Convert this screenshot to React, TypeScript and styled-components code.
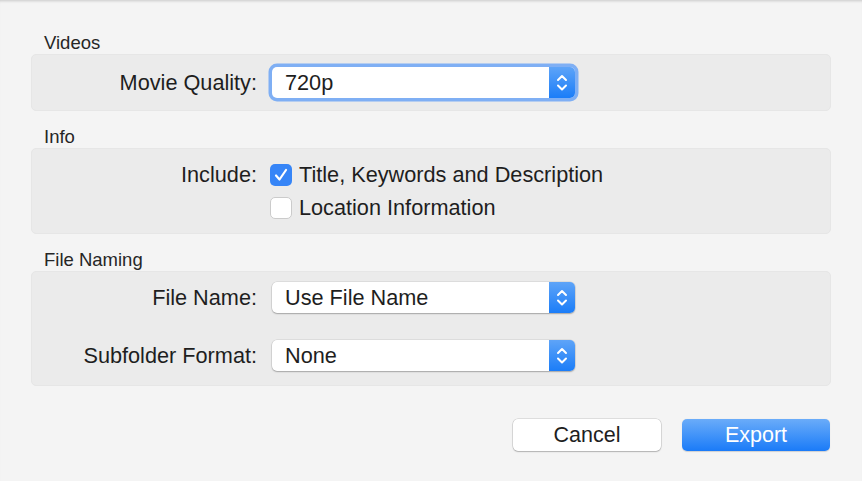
import React from "react";
import styled, { createGlobalStyle } from "styled-components";

const GlobalStyle = createGlobalStyle`
    html, body {
        margin: 0;
        padding: 0;
        background: #f4f4f4;
    }
    body {
        font-family: "Liberation Sans", Arial, sans-serif;
        color: #1e1e1e;
    }
`;

const Window = styled.div`
    width: 862px;
    height: 481px;
    box-sizing: border-box;
    padding: 32px 31px 0 31px;
    background: #f4f4f4;
    box-shadow: inset 0 3px 3px -2px rgba(0, 0, 0, 0.18);
`;

const Section = styled.section`
    margin-bottom: 15px;
`;

const SectionTitle = styled.div`
    font-size: 18.5px;
    line-height: 22px;
    color: #262626;
    padding-left: 13px;
`;

const Panel = styled.div<{ $pad: string; $rowGap: number }>`
    background: #ebebeb;
    border: 1px solid #e6e6e6;
    border-radius: 5px;
    padding: ${p => p.$pad};
    display: grid;
    grid-template-columns: 225px 1fr;
    column-gap: 15px;
    row-gap: ${p => p.$rowGap}px;
`;

const Label = styled.div<{ $top?: boolean }>`
    font-size: 21.7px;
    text-align: right;
    align-self: ${p => (p.$top ? "start" : "center")};
    line-height: 26px;
`;

const Select = styled.div<{ $focused?: boolean }>`
    width: 303px;
    height: 31px;
    display: flex;
    background: #fff;
    border-radius: 5px;
    box-shadow: ${p =>
        p.$focused
            ? "0 0 0 3.5px rgba(100, 160, 246, 0.8)"
            : "0 0 0 0.5px rgba(0, 0, 0, 0.12), 0 1px 1.5px rgba(0, 0, 0, 0.25)"};
    overflow: hidden;
`;

const SelectValue = styled.div`
    flex: 1;
    padding-left: 13px;
    font-size: 21.7px;
    line-height: 31px;
`;

const Stepper = styled.div`
    width: 26px;
    background: linear-gradient(#5ea4f8, #1b7df8);
    display: flex;
    align-items: center;
    justify-content: center;
`;

const Options = styled.div`
    display: flex;
    flex-direction: column;
    gap: 7px;
    margin-left: -2px;
`;

const CheckRow = styled.label`
    display: flex;
    align-items: center;
    height: 26px;
    font-size: 21.7px;
    gap: 7px;
`;

const Box = styled.span<{ $checked?: boolean }>`
    width: 22px;
    height: 22px;
    box-sizing: border-box;
    border-radius: 5px;
    display: flex;
    align-items: center;
    justify-content: center;
    background: ${p => (p.$checked ? "#3685f7" : "#fff")};
    border: ${p => (p.$checked ? "none" : "1px solid #cbcbcb")};
`;

const Footer = styled.div`
    display: flex;
    justify-content: flex-end;
    gap: 21px;
    margin-top: 33px;
    padding-right: 1px;
`;

const Button = styled.button<{ $primary?: boolean }>`
    width: 148px;
    height: 32px;
    border-radius: 5px;
    font-family: inherit;
    font-size: 21.5px;
    padding: 0;
    border: none;
    color: ${p => (p.$primary ? "#fff" : "#1e1e1e")};
    background: ${p => (p.$primary ? "linear-gradient(#6aacf9, #1a7bf8)" : "#fff")};
    box-shadow: ${p =>
        p.$primary
            ? "0 0.5px 1px rgba(0, 0, 0, 0.15)"
            : "0 0 0 0.5px rgba(0, 0, 0, 0.18), 0 1px 1.5px rgba(0, 0, 0, 0.2)"};
`;

const StepperIcon = () => (
    <svg width="26" height="31" viewBox="0 0 26 31">
        <path d="M9 13 L13 9 L17 13" fill="none" stroke="#fff" strokeWidth="2" strokeLinecap="round" strokeLinejoin="round" />
        <path d="M9 18.5 L13 22.5 L17 18.5" fill="none" stroke="#fff" strokeWidth="2" strokeLinecap="round" strokeLinejoin="round" />
    </svg>
);

const CheckIcon = () => (
    <svg width="22" height="22" viewBox="0 0 22 22">
        <path d="M6 11.5 L9.5 15.5 L16 6" fill="none" stroke="#fff" strokeWidth="2.2" strokeLinecap="round" strokeLinejoin="round" />
    </svg>
);

const Popup: React.FC<{ value: string; focused?: boolean }> = ({ value, focused }) => (
    <Select $focused={focused}>
        <SelectValue>{value}</SelectValue>
        <Stepper>
            <StepperIcon />
        </Stepper>
    </Select>
);

export default function App() {
    return (
        <Window>
            <GlobalStyle />
            <Section>
                <SectionTitle>Videos</SectionTitle>
                <Panel $pad="12px 0 12px 0" $rowGap={0}>
                    <Label>Movie Quality:</Label>
                    <Popup value="720p" focused />
                </Panel>
            </Section>
            <Section>
                <SectionTitle>Info</SectionTitle>
                <Panel $pad="13px 0 12px 0" $rowGap={0}>
                    <Label $top>Include:</Label>
                    <Options>
                        <CheckRow>
                            <Box $checked>
                                <CheckIcon />
                            </Box>
                            Title, Keywords and Description
                        </CheckRow>
                        <CheckRow>
                            <Box />
                            Location Information
                        </CheckRow>
                    </Options>
                </Panel>
            </Section>
            <Section>
                <SectionTitle>File Naming</SectionTitle>
                <Panel $pad="10px 0 14px 0" $rowGap={27}>
                    <Label>File Name:</Label>
                    <Popup value="Use File Name" />
                    <Label>Subfolder Format:</Label>
                    <Popup value="None" />
                </Panel>
            </Section>
            <Footer>
                <Button>Cancel</Button>
                <Button $primary>Export</Button>
            </Footer>
        </Window>
    );
}
